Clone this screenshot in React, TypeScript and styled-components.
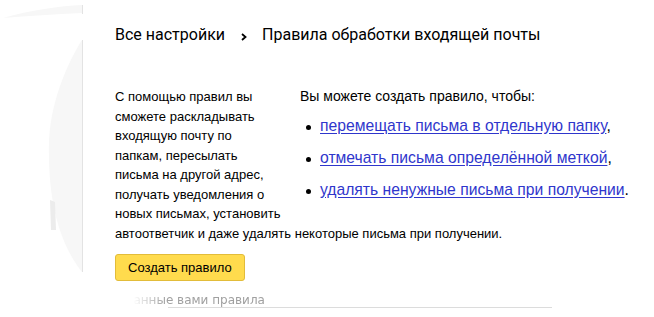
import React from "react";
import styled, { createGlobalStyle } from "styled-components";

const GlobalStyle = createGlobalStyle`
  html, body {
    margin: 0;
    padding: 0;
    background: #fff;
  }
  body {
    font-family: "Liberation Sans", Arial, sans-serif;
    color: #000;
  }
`;

const Page = styled.div`
  position: relative;
  width: 654px;
  height: 317px;
  overflow: hidden;
  background: #fff;
`;

const Shade = styled.svg`
  position: absolute;
  left: 0;
  top: 0;
  pointer-events: none;
`;

const Content = styled.div`
  position: relative;
  width: 530px;
  padding: 24px 0 0 115px;
`;

const Breadcrumbs = styled.h1`
  display: flex;
  align-items: center;
  margin: 0;
  font-family: Roboto, "Liberation Sans", sans-serif;
  font-size: 16px;
  font-weight: 400;
  line-height: 22px;
  color: #000;
`;

const Crumb = styled.span`
  white-space: nowrap;
`;

const Chevron = styled.svg`
  margin: 3px 15px 0 16px;
`;

const Intro = styled.div`
  margin-top: 41px;
  font-size: 13px;
  line-height: 19.5px;
  &::after {
    content: "";
    display: block;
    clear: both;
  }
`;

const Aside = styled.div`
  float: right;
  width: 345px;
  margin: 0 0 12px 15px;
`;

const Lead = styled.p`
  margin: 0;
  font-size: 14px;
`;

const Options = styled.ul`
  margin: 9px 0 0;
  padding: 0 0 0 20px;
  list-style: none;
`;

const Option = styled.li`
  position: relative;
  margin-bottom: 12px;
  font-size: 15.7px;
  line-height: 20px;
  white-space: nowrap;
  &:last-child {
    margin-bottom: 0;
  }
  &::before {
    content: "";
    position: absolute;
    left: -14px;
    top: 9px;
    width: 5px;
    height: 5px;
    border-radius: 50%;
    background: #000;
  }
`;

const Link = styled.a`
  color: #2f36cc;
  text-decoration: underline;
  text-underline-offset: 2px;
`;

const Body = styled.p`
  margin: 0;
`;

const CreateButton = styled.button`
  display: block;
  margin-top: 11px;
  height: 27px;
  padding: 0 12px;
  border: 1px solid #e2bc3a;
  border-radius: 3px;
  background: #ffdb4d;
  font-family: "Liberation Sans", Arial, sans-serif;
  font-size: 13px;
  color: #000;
  cursor: pointer;
`;

const SectionTitle = styled.div`
  margin: 12px 0 0 -12px;
  font-family: "DejaVu Sans", Verdana, sans-serif;
  font-size: 12px;
  line-height: 14px;
  color: #a0a0a0;
  -webkit-mask-image: linear-gradient(to right, transparent 30px, #000 62px);
  mask-image: linear-gradient(to right, transparent 30px, #000 62px);
`;

const Divider = styled.div`
  margin: 0 0 0 53px;
  width: 384px;
  height: 1px;
  background: #dcdcdc;
`;

export default function App() {
  return (
    <Page>
      <GlobalStyle />
      <Shade width="90" height="280" viewBox="0 0 90 280">
        <path d="M3 18 C30 10, 60 6, 82 5 L82 13 C55 14, 28 16, 3 18 Z" fill="#f7f7f7" />
        <path d="M82 40 C68 62, 51 100, 49 140 C48 185, 53 235, 82 272 Z" fill="#f7f7f7" />
        <path d="M50 200 L55 202 L56 230 L51 230 Z" fill="#ececec" />
        <rect x="82" y="5" width="1" height="9" fill="#e3e3e3" />
        <rect x="82" y="40" width="1" height="232" fill="#e3e3e3" />
      </Shade>
      <Content>
        <Breadcrumbs>
          <Crumb>Все настройки</Crumb>
          <Chevron width="6" height="8" viewBox="0 0 6 8">
            <path d="M1 1 L4.5 4 L1 7" fill="none" stroke="#000" strokeWidth="1.8" />
          </Chevron>
          <Crumb>Правила обработки входящей почты</Crumb>
        </Breadcrumbs>
        <Intro>
          <Aside>
            <Lead>Вы можете создать правило, чтобы:</Lead>
            <Options>
              <Option>
                <Link href="#">перемещать письма в отдельную папку</Link>,
              </Option>
              <Option>
                <Link href="#">отмечать письма определённой меткой</Link>,
              </Option>
              <Option>
                <Link href="#">удалять ненужные письма при получении</Link>.
              </Option>
            </Options>
          </Aside>
          <Body>
            С помощью правил вы
            <br />
            сможете раскладывать
            <br />
            входящую почту по
            <br />
            папкам, пересылать
            <br />
            письма на другой адрес,
            <br />
            получать уведомления о
            <br />
            новых письмах, установить
            <br />
            автоответчик и даже удалять некоторые письма при получении.
          </Body>
        </Intro>
        <CreateButton>Создать правило</CreateButton>
        <SectionTitle>Созданные вами правила</SectionTitle>
        <Divider />
      </Content>
    </Page>
  );
}
